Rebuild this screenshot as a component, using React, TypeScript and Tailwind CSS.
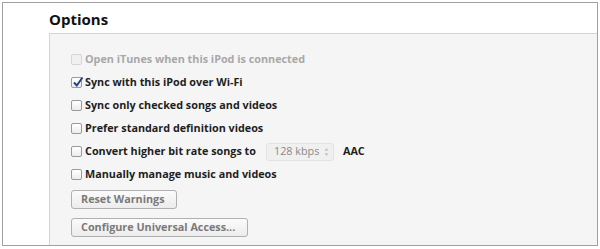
import React from 'react';

const font = { fontFamily: '"Open Sans", "Noto Sans", sans-serif' };

function Box({ checked, disabled }: { checked?: boolean; disabled?: boolean }) {
  return (
    <span
      className={`relative w-[11px] h-[11px] shrink-0 rounded-[2px] border ${
        disabled ? 'border-[#d6d6d6] bg-[#f0f0f0]' : 'border-[#9a9a9a] bg-gradient-to-b from-white to-[#ececec]'
      }`}
    >
      {checked && (
        <svg viewBox="0 0 12 12" className="absolute -top-[2px] left-0 w-[12px] h-[12px]">
          <path d="M2 6.5 L4.8 9.5 L10.5 1.5" fill="none" stroke="#24427f" strokeWidth="2" />
        </svg>
      )}
    </span>
  );
}

function Row({ label, checked, disabled, children }: { label: string; checked?: boolean; disabled?: boolean; children?: React.ReactNode }) {
  return (
    <div className="flex items-center h-[23px] gap-[3px]">
      <Box checked={checked} disabled={disabled} />
      <span className={`text-[10.8px] font-bold ${disabled ? 'text-[#a8a8a8]' : 'text-[#1e1e1e]'}`}>{label}</span>
      {children}
    </div>
  );
}

function Btn({ label, w }: { label: string; w: string }) {
  return (
    <button
      className={`${w} h-[19px] rounded-[3px] border border-[#b0b0b0] bg-gradient-to-b from-[#fbfbfb] to-[#ececec] text-[10.8px] font-bold text-[#7a7a7a] text-left pl-[9px] leading-none`}
    >
      {label}
    </button>
  );
}

export default function App() {
  return (
    <div className="w-[600px] h-[249px] bg-white p-[2px]" style={font}>
      <div className="h-[244px] border border-[#a0a0a0] flex flex-col">
        <div className="h-[30px] pl-[46px] flex items-center">
          <h2 className="text-[15px] font-bold text-[#111] pt-[2px]">Options</h2>
        </div>
        <div className="flex-1 ml-[46px] border-l border-t border-[#d4d4d4] bg-[#f5f5f5] pl-[21px] pt-[14px]">
          <Row label="Open iTunes when this iPod is connected" disabled />
          <Row label="Sync with this iPod over Wi-Fi" checked />
          <Row label="Sync only checked songs and videos" />
          <Row label="Prefer standard definition videos" />
          <Row label="Convert higher bit rate songs to">
            <div className="ml-[7px] w-[68px] h-[18px] rounded-[3px] border border-[#e2e2e2] bg-[#f0f0f0] flex items-center pl-[7px] text-[10.8px] text-[#8a8a8a]">
              128 kbps
              <svg viewBox="0 0 6 10" className="ml-[5px] w-[5px] h-[8px]">
                <path d="M3 0 L5.5 3.5 H0.5 Z M3 10 L0.5 6.5 H5.5 Z" fill="#c4c4c4" />
              </svg>
            </div>
            <span className="ml-[6px] text-[10.8px] font-bold text-[#1e1e1e]">AAC</span>
          </Row>
          <Row label="Manually manage music and videos" />
          <div className="mt-[4px] flex flex-col gap-[9px]">
            <Btn label="Reset Warnings" w="w-[106px]" />
            <Btn label="Configure Universal Access..." w="w-[177px]" />
          </div>
        </div>
      </div>
    </div>
  );
}
